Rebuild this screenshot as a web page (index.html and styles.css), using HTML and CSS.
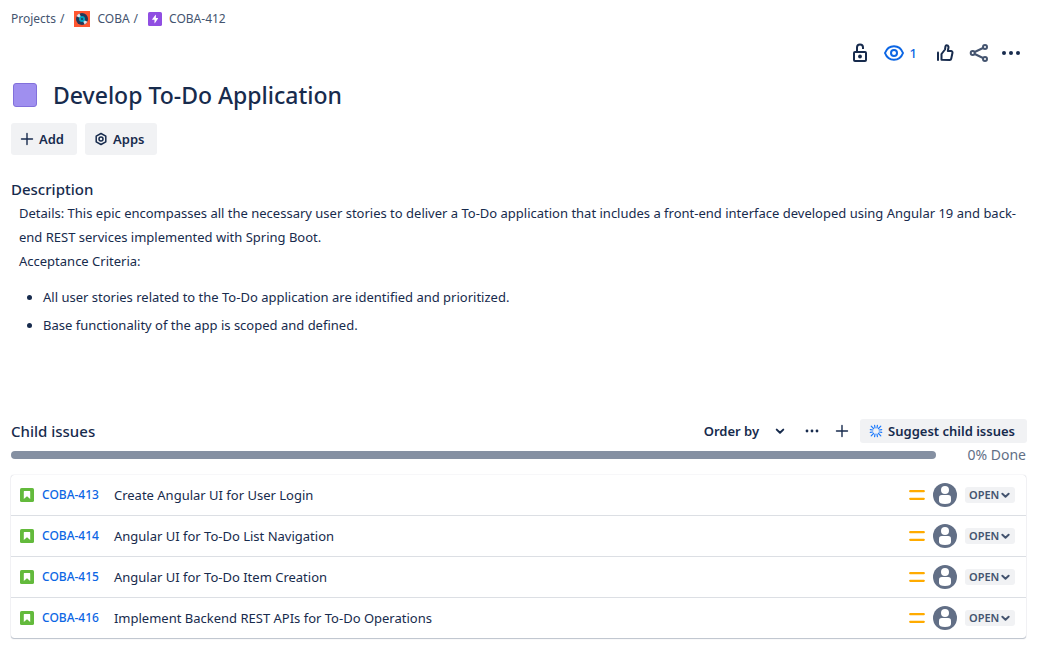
FILE: index.html
```html
<!DOCTYPE html>
<html lang="en">
<head>
<meta charset="utf-8">
<meta name="viewport" content="width=device-width, initial-scale=1">
<title>COBA-412 Develop To-Do Application</title>
<link rel="stylesheet" href="styles.css">
</head>
<body>
<svg class="sprite" aria-hidden="true">
  <symbol id="plus" viewBox="0 0 14 14"><path d="M7 1.500v11M1.500 7h11" fill="none" stroke="currentColor" stroke-width="1.4" stroke-linecap="round"/></symbol>
  <symbol id="chevron" viewBox="0 0 8 6"><path d="M1.200 1.400 4 4.100 6.800 1.400" fill="none" stroke="currentColor" stroke-width="1.7" stroke-linecap="round" stroke-linejoin="round"/></symbol>
  <symbol id="story" viewBox="0 0 14 14"><rect width="14" height="14" rx="1.6" fill="#63ba3c"/><path d="M4.2 3h5.6q.4 0 .4.4V11L7 8.3 3.8 11V3.4q0-.4.4-.4z" fill="#fff"/></symbol>
  <symbol id="medium" viewBox="0 0 16 12"><path d="M1.2 2.2h13.6M1.2 9.8h13.6" stroke="#ffab00" stroke-width="2.2" stroke-linecap="round"/></symbol>
  <symbol id="avatar" viewBox="0 0 24 24"><circle cx="12" cy="12" r="12" fill="#626f86"/><circle cx="12" cy="7" r="4" fill="#fff"/><path d="M6 14.8Q6 12 8.8 12h6.4Q18 12 18 14.800V18q0 3-6 3t-6-3z" fill="#fff"/></symbol>
</svg>

<main class="page">
  <nav class="breadcrumbs" aria-label="Breadcrumbs">
    <a href="#projects">Projects</a><span class="slash">/</span>
    <a class="crumb" href="#coba">
      <svg width="16" height="16" viewBox="0 0 16 16" aria-hidden="true"><rect width="16" height="16" fill="#ff5630"/><circle cx="8" cy="8" r="6" fill="#253858"/><path d="M8 8 2.600 5.200A6 6 0 0 1 5.400 2.600zM8 8l5.400 2.800a6 6 0 0 1-2.800 2.600z" fill="#dfe6ef"/><circle cx="8" cy="8" r="3" fill="#00a3bf"/><circle cx="8" cy="8" r="1" fill="#253858"/></svg>
      COBA</a><span class="slash">/</span>
    <a class="crumb" href="#coba-412">
      <svg width="14" height="14" viewBox="0 0 14 14" aria-hidden="true"><rect width="14" height="14" rx="1.6" fill="#904ee2"/><path d="M7.600 2.700 4.200 7.300q-.3.500.2.500h2.100v3.200q.1.500.5.100l3-4.500q.3-.5-.2-.5H7.900V2.900q0-.4-.3-.2z" fill="#fff"/></svg>
      COBA-412</a>
  </nav>

  <div class="actions">
    <button class="icon-button lock" aria-label="Restrict access"><svg width="24" height="24" viewBox="0 0 24 24" fill="none" stroke="currentColor" stroke-width="2"><rect x="6" y="11" width="12" height="9" rx="1"/><path d="M9 11V6.500a3 3 0 0 1 6 0V8"/><circle cx="12" cy="15.500" r="1.900" fill="currentColor" stroke="none"/></svg></button>
    <button class="icon-button watch" aria-label="Watchers: 1"><svg width="24" height="24" viewBox="0 0 24 24" fill="none" stroke="currentColor" stroke-width="2"><path d="M3 12c1.500-4 5-6.800 9-6.800s7.500 2.800 9 6.800c-1.500 4-5 6.800-9 6.800S4.500 16 3 12z"/><circle cx="12" cy="12" r="3"/></svg><span>1</span></button>
    <button class="icon-button" aria-label="Like"><svg width="24" height="24" viewBox="0 0 24 24" fill="none" stroke="currentColor" stroke-width="2" stroke-linejoin="round" stroke-linecap="round"><path d="M5 11.500V19"/><path d="M8.500 18.800V13L12 8.500l.5-3.300a1.200 1.200 0 0 1 1.300-.9c1.200.1 1.900 1.100 1.700 2.200L14.800 10H18a1.500 1.500 0 0 1 1.500 1.800l-1.300 6a1.500 1.500 0 0 1-1.500 1.200z"/></svg></button>
    <button class="icon-button share" aria-label="Share"><svg width="24" height="24" viewBox="0 0 24 24" fill="none" stroke="currentColor" stroke-width="2"><circle cx="5.700" cy="12" r="2"/><circle cx="18" cy="6" r="2"/><circle cx="18" cy="18" r="2"/><path d="m7.700 11 8.300-4M7.700 13l8.300 4"/></svg></button>
    <button class="icon-button" aria-label="Actions"><svg width="24" height="24" viewBox="0 0 24 24" fill="currentColor"><circle cx="5" cy="12" r="2"/><circle cx="12" cy="12" r="2"/><circle cx="19" cy="12" r="2"/></svg></button>
  </div>

  <header class="title">
    <button class="color-swatch" aria-label="Issue color"></button>
    <h1>Develop To-Do Application</h1>
  </header>

  <div class="toolbar">
    <button class="button"><svg width="14" height="14" aria-hidden="true"><use href="#plus"/></svg>Add</button>
    <button class="button"><svg width="14" height="14" viewBox="0 0 14 14" fill="none" stroke="currentColor" stroke-width="1.500" stroke-linejoin="round" aria-hidden="true"><path d="m7 1.500 4.800 2.700v5.600L7 12.500 2.200 9.800V4.200z"/><circle cx="7" cy="7" r="2"/></svg>Apps</button>
  </div>

  <section class="description">
    <h2>Description</h2>
    <div class="prose">
      <p>Details: This epic encompasses all the necessary user stories to deliver a To-Do application that includes a front-end interface developed using Angular 19 and back-end REST services implemented with Spring Boot.</p>
      <p>Acceptance Criteria:</p>
      <ul>
        <li>All user stories related to the To-Do application are identified and prioritized.</li>
        <li>Base functionality of the app is scoped and defined.</li>
      </ul>
    </div>
  </section>

  <section class="children">
    <div class="children-header">
      <h2>Child issues</h2>
      <button class="plain order" aria-haspopup="menu">Order by<svg width="10" height="7" aria-hidden="true"><use href="#chevron"/></svg></button>
      <button class="plain" aria-label="More"><svg width="14" height="14" viewBox="0 0 14 14" fill="currentColor"><circle cx="2" cy="7" r="1.400"/><circle cx="7" cy="7" r="1.400"/><circle cx="12" cy="7" r="1.400"/></svg></button>
      <button class="plain create" aria-label="Create child issue"><svg width="14" height="14"><use href="#plus"/></svg></button>
      <button class="button suggest"><svg width="14" height="14" viewBox="0 0 14 14" fill="none" stroke="#1d7afc" stroke-width="1.200" stroke-linecap="round" aria-hidden="true"><path d="M5.600 1.300 6 3.800M8.400 1.300 8 3.800M5.600 12.700 6 10.200M8.400 12.700 8 10.200M1.300 5.600l2.500.4M1.300 8.400 3.800 8M12.700 5.600 10.200 6M12.700 8.400 10.200 8M2.200 2.200l2.300 2.300M11.800 2.200 9.500 4.500M2.200 11.800l2.300-2.300M11.800 11.800 9.500 9.500"/></svg>Suggest child issues</button>
    </div>
    <div class="progress">
      <div class="bar" role="progressbar" aria-label="Done" aria-valuenow="0" aria-valuemin="0" aria-valuemax="100"></div>
      <span>0% Done</span>
    </div>
    <ul class="issues">
      <li>
        <svg width="14" height="14" role="img" aria-label="Story"><use href="#story"/></svg>
        <a class="key" href="#coba-413">COBA-413</a><span class="summary">Create Angular UI for User Login</span>
        <svg width="16" height="12" role="img" aria-label="Medium"><use href="#medium"/></svg>
        <svg width="24" height="24" role="img" aria-label="Unassigned"><use href="#avatar"/></svg>
        <span class="status"><select aria-label="Status of COBA-413"><option>OPEN</option></select><svg width="9" height="7" aria-hidden="true"><use href="#chevron"/></svg></span>
      </li>
      <li>
        <svg width="14" height="14" role="img" aria-label="Story"><use href="#story"/></svg>
        <a class="key" href="#coba-414">COBA-414</a><span class="summary">Angular UI for To-Do List Navigation</span>
        <svg width="16" height="12" role="img" aria-label="Medium"><use href="#medium"/></svg>
        <svg width="24" height="24" role="img" aria-label="Unassigned"><use href="#avatar"/></svg>
        <span class="status"><select aria-label="Status of COBA-414"><option>OPEN</option></select><svg width="9" height="7" aria-hidden="true"><use href="#chevron"/></svg></span>
      </li>
      <li>
        <svg width="14" height="14" role="img" aria-label="Story"><use href="#story"/></svg>
        <a class="key" href="#coba-415">COBA-415</a><span class="summary">Angular UI for To-Do Item Creation</span>
        <svg width="16" height="12" role="img" aria-label="Medium"><use href="#medium"/></svg>
        <svg width="24" height="24" role="img" aria-label="Unassigned"><use href="#avatar"/></svg>
        <span class="status"><select aria-label="Status of COBA-415"><option>OPEN</option></select><svg width="9" height="7" aria-hidden="true"><use href="#chevron"/></svg></span>
      </li>
      <li>
        <svg width="14" height="14" role="img" aria-label="Story"><use href="#story"/></svg>
        <a class="key" href="#coba-416">COBA-416</a><span class="summary">Implement Backend REST APIs for To-Do Operations</span>
        <svg width="16" height="12" role="img" aria-label="Medium"><use href="#medium"/></svg>
        <svg width="24" height="24" role="img" aria-label="Unassigned"><use href="#avatar"/></svg>
        <span class="status"><select aria-label="Status of COBA-416"><option>OPEN</option></select><svg width="9" height="7" aria-hidden="true"><use href="#chevron"/></svg></span>
      </li>
    </ul>
  </section>
</main>
</body>
</html>
```

FILE: styles.css
```css
* { box-sizing: border-box; }

body {
  margin: 0;
  background: #fff;
  color: #172b4d;
  font: 13px/20px "Segoe UI", "Noto Sans", sans-serif;
}

.sprite { position: absolute; width: 0; height: 0; }
svg { display: block; flex: none; }
a { color: inherit; text-decoration: none; }
a:hover { text-decoration: underline; }

button {
  display: flex;
  align-items: center;
  border: 0;
  padding: 0;
  background: none;
  color: inherit;
  font: inherit;
  font-weight: 600;
  cursor: pointer;
}

h1, h2, p, ul { margin: 0; padding: 0; }
h1 { font-size: 23px; line-height: 28px; font-weight: 500; }
h2 { font-size: 15px; line-height: 20px; font-weight: 500; }

.page { padding: 7px 12px 7px 11px; }

.breadcrumbs {
  display: flex;
  align-items: center;
  height: 24px;
  color: #44546f;
  font-size: 12px;
}
.crumb { display: flex; align-items: center; gap: 7px; }
.slash { margin: 0 10px 0 4px; }

.actions {
  display: flex;
  justify-content: flex-end;
  align-items: center;
  gap: 8px;
  height: 32px;
  margin-top: 6px;
  padding-right: 4px;
}
.icon-button { height: 32px; }
.lock { margin-right: 2px; }
.watch { margin-right: 8px; gap: 4px; color: #0c66e4; font-weight: 500; }
.watch + .icon-button { margin-right: 2px; }
.share { color: #44546f; }

.title { display: flex; align-items: center; gap: 16px; margin-top: 12px; padding-left: 2px; }
.color-swatch {
  width: 24px;
  height: 24px;
  border: 1px solid #8270db;
  border-radius: 3px;
  background: #9f8fef;
}

.toolbar { display: flex; gap: 8px; margin-top: 14px; }
.button {
  gap: 5px;
  height: 32px;
  padding: 0 12px 0 9px;
  border-radius: 3px;
  background: #f1f2f4;
}
.toolbar .button { padding-right: 13px; }

.description { margin-top: 24px; }
.prose { margin-top: 2px; padding: 0 4px 0 8px; line-height: 24px; }
.prose ul { margin-top: 12px; padding-left: 24px; }
.prose li + li { margin-top: 4px; }

.children { margin-top: 82px; }
.children-header { display: flex; align-items: center; height: 24px; }
.children-header h2 { flex: 1; }
.plain { height: 24px; margin-right: 16px; }
.order { gap: 16px; margin-right: 20px; }
.create { margin-right: 11px; }
.suggest { gap: 5px; height: 24px; }

.progress {
  display: flex;
  align-items: center;
  height: 24px;
  padding-right: 1px;
  color: #626f86;
  font-size: 14px;
}
.bar { flex: 1; height: 8px; margin-right: 31px; border-radius: 4px; background: #8590a2; }

.issues {
  margin: 8px 1px 0 0;
  border-radius: 3px;
  list-style: none;
  box-shadow: 0 1px 1px #091e4240, 0 0 1px #091e424f;
}
.issues li {
  display: flex;
  align-items: center;
  gap: 8px;
  height: 41px;
  padding: 0 11px 0 9px;
  border-bottom: 1px solid #dcdfe4;
}
.issues li:last-child { height: 40px; border-bottom: 0; }
.key { margin-right: 7px; color: #0c66e4; font-size: 12px; font-weight: 500; }
.summary { flex: 1; }

.status { display: grid; align-items: center; color: #44546f; }
.status select, .status svg { grid-area: 1 / 1; }
.status select {
  appearance: none;
  width: 50px;
  height: 16px;
  margin: 0;
  padding: 0 0 0 4px;
  border: 0;
  border-radius: 3px;
  background: #f1f2f4;
  color: inherit;
  font: 600 11px/16px "Segoe UI", "Noto Sans", sans-serif;
}
.status svg { justify-self: end; margin-right: 5px; pointer-events: none; }
```
